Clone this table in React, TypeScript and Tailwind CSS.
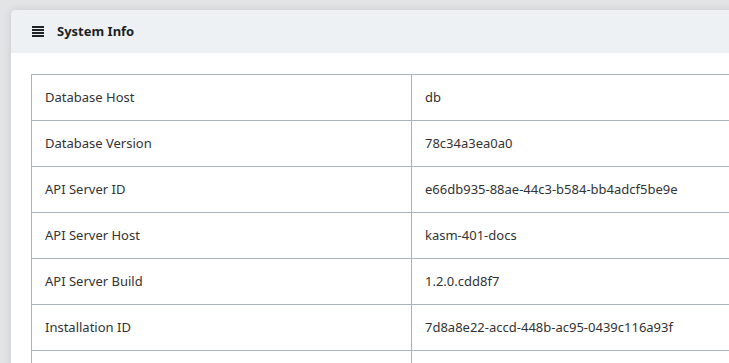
const rows: [string, string][] = [
  ['Database Host', 'db'],
  ['Database Version', '78c34a3ea0a0'],
  ['API Server ID', 'e66db935-88ae-44c3-b584-bb4adcf5be9e'],
  ['API Server Host', 'kasm-401-docs'],
  ['API Server Build', '1.2.0.cdd8f7'],
  ['Installation ID', '7d8a8e22-accd-448b-ac95-0439c116a93f'],
  ['', ''],
]

function ListIcon() {
  return (
    <svg width="12" height="11" viewBox="0 0 12 11" className="shrink-0">
      <rect x="0" y="0" width="12" height="2" fill="#1f2328" />
      <rect x="0" y="3" width="12" height="2" fill="#1f2328" />
      <rect x="0" y="6" width="12" height="2" fill="#1f2328" />
      <rect x="0" y="9" width="12" height="2" fill="#1f2328" />
    </svg>
  )
}

export default function App() {
  return (
    <div className="h-[363px] overflow-hidden bg-[#e3e4e5] pl-[11px] pt-[10px]" style={{ fontFamily: '"Noto Sans", sans-serif' }}>
      <div className="w-[760px] h-[400px] rounded-tl-[5px] bg-white shadow-[0_0_8px_rgba(0,0,0,0.12)] overflow-hidden">
        <div className="flex h-[43px] items-center gap-[13px] bg-[#eef1f4] pl-[21px]">
          <ListIcon />
          <span className="text-[13px] font-bold text-[#1b1f23]">System Info</span>
        </div>
        <div className="pl-5 pt-[21px]">
          <table className="w-[760px] border-collapse text-[13px] text-[#333]">
            <tbody>
              {rows.map(([k, v], i) => (
                <tr key={i} className="h-[46px]">
                  <td className="w-[380px] border border-[#a8b3bc] px-[13px] align-middle">{k}</td>
                  <td className="border border-[#a8b3bc] px-[13px] align-middle">{v}</td>
                </tr>
              ))}
            </tbody>
          </table>
        </div>
      </div>
    </div>
  )
}
